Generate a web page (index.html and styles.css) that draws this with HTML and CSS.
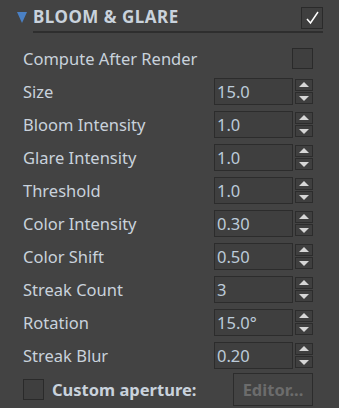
FILE: index.html
```html
<!DOCTYPE html>
<html lang="en">

<head>
    <meta charset="UTF-8">
    <title>Bloom &amp; Glare</title>
    <link rel="stylesheet" href="styles.css">
</head>

<body>
    <div class="panel">
        <!-- section header -->
        <div class="panel-head">
            <span class="arrow"></span>
            <h2 class="title">BLOOM &amp; GLARE</h2>
            <span class="check checked">
                <svg width="16" height="14" viewBox="0 0 16 14"><path d="M3 8 L6.5 12 L14 1" fill="none" stroke="#fff" stroke-width="1.5"/></svg>
            </span>
        </div>

        <div class="row">
            <label>Compute After Render</label>
            <span class="check"></span>
        </div>

        <div class="row">
            <label>Size</label>
            <div class="field"><input type="text" value="15.0"><div class="spin"><button class="up"></button><button class="down"></button></div></div>
        </div>
        <div class="row">
            <label>Bloom Intensity</label>
            <div class="field"><input type="text" value="1.0"><div class="spin"><button class="up"></button><button class="down"></button></div></div>
        </div>
        <div class="row">
            <label>Glare Intensity</label>
            <div class="field"><input type="text" value="1.0"><div class="spin"><button class="up"></button><button class="down"></button></div></div>
        </div>
        <div class="row">
            <label>Threshold</label>
            <div class="field"><input type="text" value="1.0"><div class="spin"><button class="up"></button><button class="down"></button></div></div>
        </div>
        <div class="row">
            <label>Color Intensity</label>
            <div class="field"><input type="text" value="0.30"><div class="spin"><button class="up"></button><button class="down"></button></div></div>
        </div>
        <div class="row">
            <label>Color Shift</label>
            <div class="field"><input type="text" value="0.50"><div class="spin"><button class="up"></button><button class="down"></button></div></div>
        </div>
        <div class="row">
            <label>Streak Count</label>
            <div class="field"><input type="text" value="3"><div class="spin"><button class="up"></button><button class="down"></button></div></div>
        </div>
        <div class="row">
            <label>Rotation</label>
            <div class="field"><input type="text" value="15.0°"><div class="spin"><button class="up"></button><button class="down"></button></div></div>
        </div>
        <div class="row">
            <label>Streak Blur</label>
            <div class="field"><input type="text" value="0.20"><div class="spin"><button class="up"></button><button class="down"></button></div></div>
        </div>

        <div class="row aperture">
            <span class="check"></span>
            <label class="bold">Custom aperture:</label>
            <button class="editor" disabled>Editor...</button>
        </div>
    </div>
</body>

</html>
```

FILE: styles.css
```css
body {
    margin: 0;
    background-color: #434343;
    font-family: 'Noto Sans', sans-serif;
    color: #c9d2dc;
}

.panel {
    width: 339px;
    height: 408px;
    padding: 0 26px 0 23px;
    box-sizing: border-box;
}

.panel-head {
    display: flex;
    align-items: center;
    height: 38px;
    margin-right: -10px;
    position: relative;
}

.arrow {
    width: 0;
    height: 0;
    border-left: 5px solid transparent;
    border-right: 5px solid transparent;
    border-top: 11px solid #4a80c4;
    margin: -4px 0 0 -6px;
}

.title {
    flex: 1;
    margin: 0 0 0 6px;
    padding-bottom: 3px;
    border-bottom: 2px solid #2e2e2e;
    font-size: 17px;
    font-weight: bold;
    letter-spacing: 0.5px;
    color: #c9d2dc;
    line-height: 22px;
}

.panel-head .check {
    position: absolute;
    right: 0;
    top: 7px;
    width: 20px;
    height: 20px;
}

.check {
    display: inline-flex;
    align-items: center;
    justify-content: center;
    width: 19px;
    height: 19px;
    border: 1px solid #2a2a2a;
    background-color: #3f3f3f;
    flex-shrink: 0;
    box-sizing: content-box;
}

.row {
    display: flex;
    align-items: center;
    justify-content: space-between;
    height: 33px;
}

.row:nth-child(2) {
    margin-top: 4px;
}

label {
    font-size: 16.5px;
}

.field {
    display: flex;
    gap: 2px;
}

.field input {
    width: 79px;
    height: 27px;
    box-sizing: border-box;
    border: 1px solid #2c2c2c;
    background-color: #3f3f3f;
    color: #bccbd9;
    font-family: 'Noto Sans', sans-serif;
    font-size: 16.5px;
    padding: 0 2px;
    outline: none;
}

.spin {
    display: flex;
    flex-direction: column;
    gap: 1px;
    padding-top: 1px;
}

.spin button {
    width: 18px;
    height: 12px;
    border: 1px solid #2c2c2c;
    background-color: #3f3f3f;
    padding: 0;
    position: relative;
}

.spin button::after {
    content: '';
    position: absolute;
    left: 3px;
    border-left: 5px solid transparent;
    border-right: 5px solid transparent;
}

.spin .up::after {
    top: 2px;
    border-bottom: 5px solid #d6d6d6;
}

.spin .down::after {
    top: 3px;
    border-top: 5px solid #d6d6d6;
}

.aperture {
    height: 34px;
    justify-content: flex-start;
}

.aperture .bold {
    font-weight: bold;
    margin-left: 8px;
    flex: 1;
}

.editor {
    width: 80px;
    height: 33px;
    border: 1px solid #2c2c2c;
    background-color: #434343;
    color: #6c6c6c;
    font-family: 'Noto Sans', sans-serif;
    font-size: 16.5px;
    font-weight: bold;
}
```
